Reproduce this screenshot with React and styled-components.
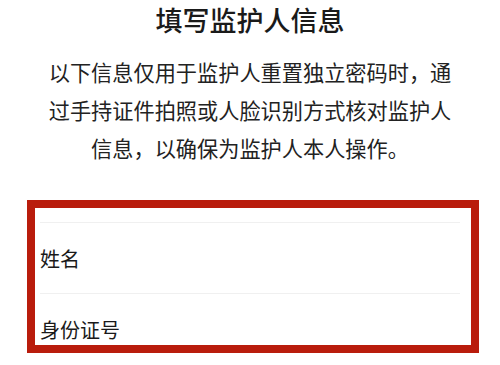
import React from 'react';
import styled, { createGlobalStyle } from 'styled-components';

const GlobalStyle = createGlobalStyle`
    html, body {
        margin: 0;
        padding: 0;
        background: #ffffff;
    }
    body {
        font-family: "Noto Sans CJK SC", "Noto Sans", sans-serif;
        color: #1a1a1a;
    }
`;

const Page = styled.div`
    width: 500px;
    height: 365px;
    overflow: hidden;
    background: #ffffff;
`;

const Title = styled.h1`
    margin: 0;
    font-size: 27px;
    line-height: 40px;
    font-weight: 500;
    text-align: center;
    color: #1a1a1a;
`;

const Intro = styled.p`
    margin: 13px 0 0;
    padding: 0 45px;
    font-size: 21.2px;
    line-height: 38px;
    text-align: center;
    color: #222222;
`;

const FieldList = styled.div`
    position: relative;
    margin: 55px 40px 0;
`;

const FieldRow = styled.div`
    display: flex;
    align-items: center;
    height: 70px;
    border-top: 1px solid #f0f0f0;
    font-size: 20px;
    color: #1a1a1a;

    &:last-child {
        border-bottom: 1px solid #f0f0f0;
    }
`;

// annotation frame drawn over the form fields
const Highlight = styled.div`
    position: absolute;
    left: -13px;
    top: -22px;
    width: 452px;
    height: 153px;
    box-sizing: border-box;
    border: 8px solid #b91c0c;
    pointer-events: none;
`;

const App = () => {
    return (
        <Page>
            <GlobalStyle />
            <Title>填写监护人信息</Title>
            <Intro>
                以下信息仅用于监护人重置独立密码时，通过手持证件拍照或人脸识别方式核对监护人信息，以确保为监护人本人操作。
            </Intro>
            <FieldList>
                <FieldRow>姓名</FieldRow>
                <FieldRow>身份证号</FieldRow>
                <Highlight />
            </FieldList>
        </Page>
    );
};

export default App;
